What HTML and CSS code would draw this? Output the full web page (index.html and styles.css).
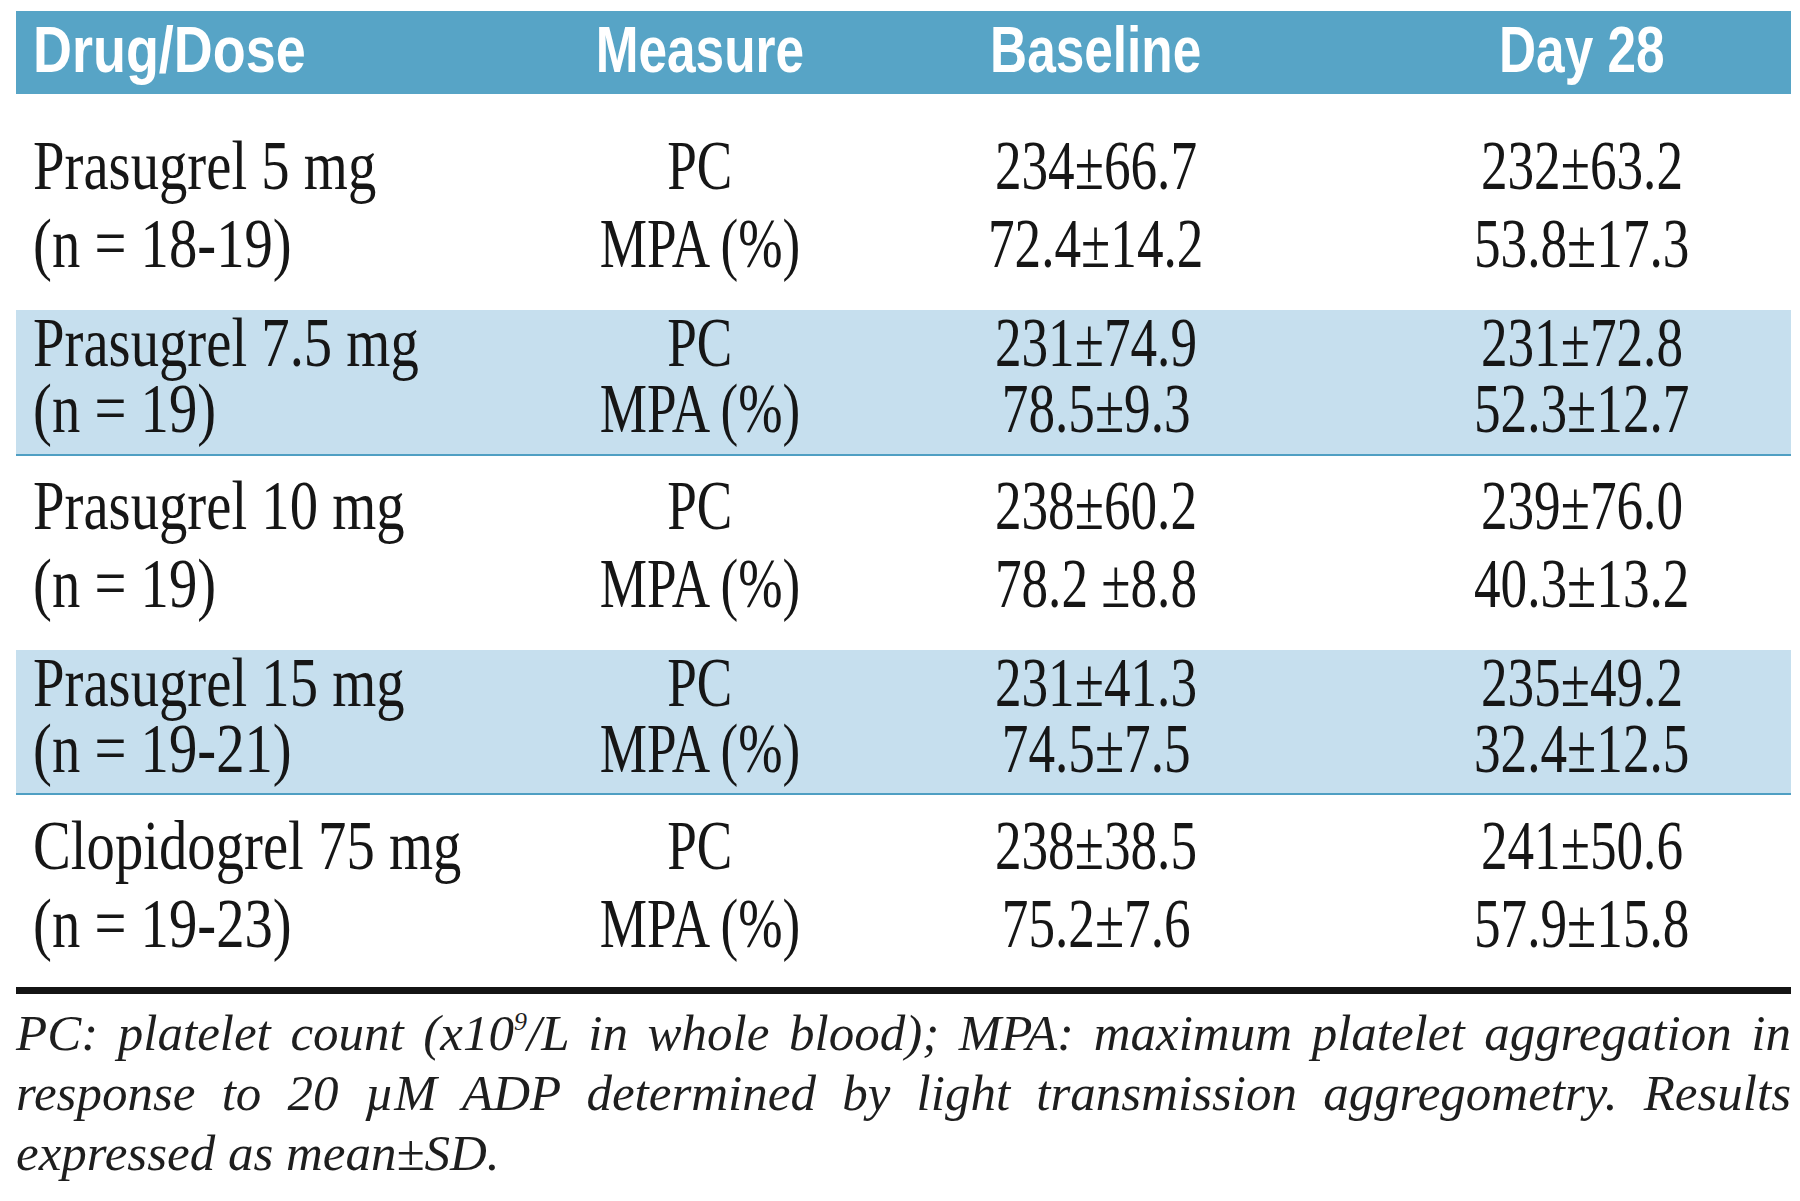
FILE: index.html
```html
<!DOCTYPE html>
<html lang="en">
<head>
<meta charset="utf-8">
<title>Prasugrel vs Clopidogrel</title>
<link rel="stylesheet" href="styles.css">
</head>
<body>
<div class="page">
  <div class="table">
    <div class="row head">
      <div class="cell first"><span class="t">Drug/Dose</span></div>
      <div class="cell"><span class="t">Measure</span></div>
      <div class="cell"><span class="t">Baseline</span></div>
      <div class="cell"><span class="t">Day 28</span></div>
    </div>

    <div class="row white r1">
      <div class="cell first"><span class="t">Prasugrel 5 mg</span><span class="t">(n = 18-19)</span></div>
      <div class="cell"><span class="t">PC</span><span class="t">MPA (%)</span></div>
      <div class="cell"><span class="t">234±66.7</span><span class="t">72.4±14.2</span></div>
      <div class="cell"><span class="t">232±63.2</span><span class="t">53.8±17.3</span></div>
    </div>

    <div class="row band r2">
      <div class="cell first"><span class="t">Prasugrel 7.5 mg</span><span class="t">(n = 19)</span></div>
      <div class="cell"><span class="t">PC</span><span class="t">MPA (%)</span></div>
      <div class="cell"><span class="t">231±74.9</span><span class="t">78.5±9.3</span></div>
      <div class="cell"><span class="t">231±72.8</span><span class="t">52.3±12.7</span></div>
    </div>

    <div class="row white r3">
      <div class="cell first"><span class="t">Prasugrel 10 mg</span><span class="t">(n = 19)</span></div>
      <div class="cell"><span class="t">PC</span><span class="t">MPA (%)</span></div>
      <div class="cell"><span class="t">238±60.2</span><span class="t">78.2 ±8.8</span></div>
      <div class="cell"><span class="t">239±76.0</span><span class="t">40.3±13.2</span></div>
    </div>

    <div class="row band r4">
      <div class="cell first"><span class="t">Prasugrel 15 mg</span><span class="t">(n = 19-21)</span></div>
      <div class="cell"><span class="t">PC</span><span class="t">MPA (%)</span></div>
      <div class="cell"><span class="t">231±41.3</span><span class="t">74.5±7.5</span></div>
      <div class="cell"><span class="t">235±49.2</span><span class="t">32.4±12.5</span></div>
    </div>

    <div class="row white r5">
      <div class="cell first"><span class="t">Clopidogrel 75 mg</span><span class="t">(n = 19-23)</span></div>
      <div class="cell"><span class="t">PC</span><span class="t">MPA (%)</span></div>
      <div class="cell"><span class="t">238±38.5</span><span class="t">75.2±7.6</span></div>
      <div class="cell"><span class="t">241±50.6</span><span class="t">57.9±15.8</span></div>
    </div>
  </div>

  <div class="rule"></div>

  <div class="note">
    <span class="jl">PC: platelet count (x10<sup>9</sup>/L in whole blood); MPA: maximum platelet aggregation in</span>
    <span class="jl">response to 20 µM ADP determined by light transmission aggregometry. Results</span>
    <span class="last">expressed as mean±SD.</span>
  </div>
</div>
</body>
</html>
```

FILE: styles.css
```css
html, body {
  margin: 0;
  padding: 0;
  background: #ffffff;
}

.page {
  width: 1775px;
  padding: 11px 0 0 16px;
}

.table {
  display: flex;
  flex-direction: column;
}

.row {
  display: grid;
  grid-template-columns: 565px 238px 554px 418px;
}

.cell {
  display: flex;
  flex-direction: column;
  align-items: center;
}

.cell.first {
  align-items: flex-start;
  padding-left: 17px;
}

.t {
  display: inline-block;
  white-space: nowrap;
  transform-origin: center;
}

.cell.first .t {
  transform-origin: left center;
}

/* header */
.head {
  background: #57a4c6;
  height: 83px;
  padding-bottom: 6px;
  box-sizing: border-box;
}

.head .t {
  font-family: "Liberation Sans", Arial, sans-serif;
  font-weight: bold;
  font-size: 65px;
  line-height: 77px;
  color: #ffffff;
  transform: scaleX(0.79);
}

.head .cell.first .t {
  transform: scaleX(0.83);
}

/* body rows */
.white .t,
.band .t {
  font-family: "Liberation Serif", "Times New Roman", serif;
  font-size: 70px;
  color: #161616;
  transform: scaleX(0.76);
}

.white .cell.first .t,
.band .cell.first .t {
  transform: scaleX(0.81);
}

.white .t {
  line-height: 78px;
}

.band .t {
  line-height: 66px;
}

.band {
  background: #c6dfee;
  border-bottom: 2px solid #4f9fc3;
}

.r1 {
  padding: 33px 0 27px;
}

.r2 {
  padding: 0 0 12px;
}

.r3 {
  padding: 11px 0 27px;
}

.r4 {
  padding: 0 0 11px;
}

.r5 {
  padding: 12px 0 24px;
}

.rule {
  height: 7px;
  background: #141414;
}

/* footnote */
.note {
  margin-top: 9px;
  font-family: "Liberation Serif", "Times New Roman", serif;
  font-style: italic;
  font-size: 51px;
  line-height: 60px;
  color: #1e1e1e;
}

.note .jl {
  display: block;
  text-align: justify;
  text-align-last: justify;
}

.note .last {
  display: block;
}

.note sup {
  font-size: 26px;
  line-height: 0;
  vertical-align: 20px;
}
```
